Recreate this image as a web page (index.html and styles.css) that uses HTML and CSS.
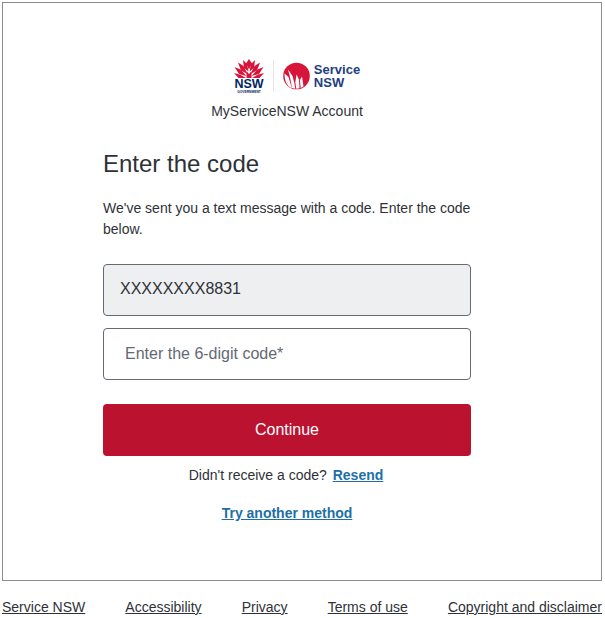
FILE: index.html
```html
<!DOCTYPE html>
<html lang="en">
<head>
<meta charset="utf-8">
<title>Enter the code</title>
<link rel="stylesheet" href="styles.css">
</head>
<body>
<main class="card">
  <div class="panel">
    <div class="logos">
      <svg class="logo-nsw" width="30" height="34" viewBox="0 0 30 34">
        <g fill="#d7153a">
          <path d="M15 0l3 4.500L15 10.500 12 4.500z"/>
          <path d="M9 1l4 4 1.500 7.500L10 9z"/>
          <path d="M21 1l-4 4-1.500 7.500L20 9z"/>
          <path d="M4 3.500l5.500 3.500 4 8-6.500-3.500z"/>
          <path d="M26 3.500L20.500 7l-4 8 6.500-3.500z"/>
          <path d="M.5 8l6 2.500 6 6.500-7.500-2z"/>
          <path d="M29.500 8l-6 2.500-6 6.500 7.500-2z"/>
          <path d="M0 14l6.500 1.800 5.500 3.200H4.500z"/>
          <path d="M30 14l-6.500 1.800-5.500 3.200h7.500z"/>
          <path d="M12.500 12l2.500 3 2.500-3v7h-5z"/>
        </g>
        <text class="nsw-word" x="15" y="29" text-anchor="middle">NSW</text>
        <text class="nsw-gov" x="15" y="33.500" text-anchor="middle">GOVERNMENT</text>
      </svg>
      <span class="logo-rule"></span>
      <svg class="logo-circle" width="27" height="30" viewBox="0 -1 27 30">
        <circle cx="13.500" cy="14" r="13.300" fill="#d7153a"/>
        <g fill="#fff">
          <path d="M1.500 11.500l4 3.500 2.500 8.500 1 2.800C4 24.500 1.500 19 1.500 11.500z"/>
          <path d="M5 7.500l4.500 6.500 1.800 7 1 5.800-3.300-.8L7 15z"/>
          <path d="M13.500 12.500l2.500 5 .5 8.800-3.200.5-1-6.300z"/>
          <path d="M19 14.500l1.500 10-2.800 1.500-.8-8z"/>
        </g>
      </svg>
      <div class="service-word"><span>Service</span><span>NSW</span></div>
    </div>
    <p class="account">MyServiceNSW Account</p>
    <h1 class="title">Enter the code</h1>
    <p class="intro">We've sent you a text message with a code. Enter the code below.</p>
    <form class="form">
      <div class="field field-filled">XXXXXXXX8831</div>
      <input class="field field-input" type="text" placeholder="Enter the 6-digit code*">
      <button class="continue" type="button">Continue</button>
    </form>
    <p class="resend">Didn't receive a code? <a class="action-link resend-link" href="#">Resend</a></p>
    <p class="another"><a class="action-link" href="#">Try another method</a></p>
  </div>
</main>
<footer class="footer">
  <a href="#">Service NSW</a>
  <a href="#">Accessibility</a>
  <a href="#">Privacy</a>
  <a href="#">Terms of use</a>
  <a href="#">Copyright and disclaimer</a>
</footer>
</body>
</html>
```
FILE: styles.css
```css
* { box-sizing: border-box; }
html, body { margin: 0; padding: 0; }
body {
  width: 605px;
  height: 618px;
  overflow: hidden;
  padding: 2px 3px 0 2px;
  font-family: "Liberation Sans", Arial, sans-serif;
  color: #2e3238;
  background: #fff;
}
.card {
  height: 579px;
  border: 1px solid #8c8c8c;
  padding: 56px 130px 0 100px;
}
.panel { width: 368px; }
.logos {
  display: flex;
  align-items: center;
  justify-content: center;
  height: 34px;
  padding-left: 20px;
}
.logo-nsw { display: block; margin-right: 9px; }
.nsw-word { font: 700 12.500px "Liberation Sans", Arial, sans-serif; fill: #002664; }
.nsw-gov { font: 700 3.300px "Liberation Sans", Arial, sans-serif; fill: #002664; }
.logo-rule { width: 1px; height: 32px; background: #e4e4e4; margin-right: 9px; }
.logo-circle { display: block; margin-right: 4px; }
.service-word {
  display: flex;
  flex-direction: column;
  font-size: 13px;
  line-height: 13px;
  font-weight: 700;
  color: #22407f;
}
.account {
  margin: 8px 0 0;
  text-align: center;
  font-size: 14px;
  line-height: 20px;
}
.title {
  margin: 27px 0 0;
  font-size: 24px;
  line-height: 32px;
  font-weight: 400;
}
.intro {
  margin: 18px 0 0;
  font-size: 14px;
  line-height: 21px;
}
.form { display: flex; flex-direction: column; margin-top: 24px; }
.field {
  width: 368px;
  height: 52px;
  border: 1px solid #646974;
  border-radius: 4px;
  font-family: inherit;
  font-size: 16px;
}
.field-filled {
  display: flex;
  align-items: center;
  padding: 0 0 2px 16px;
  background: #eeeff1;
  color: #2e3238;
}
.field-input {
  margin-top: 12px;
  padding: 0 21px;
  background: #fff;
  outline: none;
}
.field-input::placeholder { color: #646974; opacity: 1; }
.continue {
  margin-top: 24px;
  height: 52px;
  border: 0;
  border-radius: 4px;
  background: #bb1230;
  color: #fff;
  font-family: inherit;
  font-size: 16px;
}
.resend {
  margin: 10px 0 0;
  padding-right: 2px;
  text-align: center;
  font-size: 14px;
  line-height: 18px;
}
.action-link {
  color: #1d6fa5;
  font-weight: 700;
  text-decoration: underline;
}
.resend-link { margin-left: 2px; }
.another {
  margin: 20px 0 0;
  text-align: center;
  font-size: 14px;
  line-height: 18px;
}
.footer {
  display: flex;
  justify-content: space-between;
  margin-top: 17px;
  font-size: 14px;
  line-height: 18px;
}
.footer a { color: #2e3238; text-decoration: underline; }
```
